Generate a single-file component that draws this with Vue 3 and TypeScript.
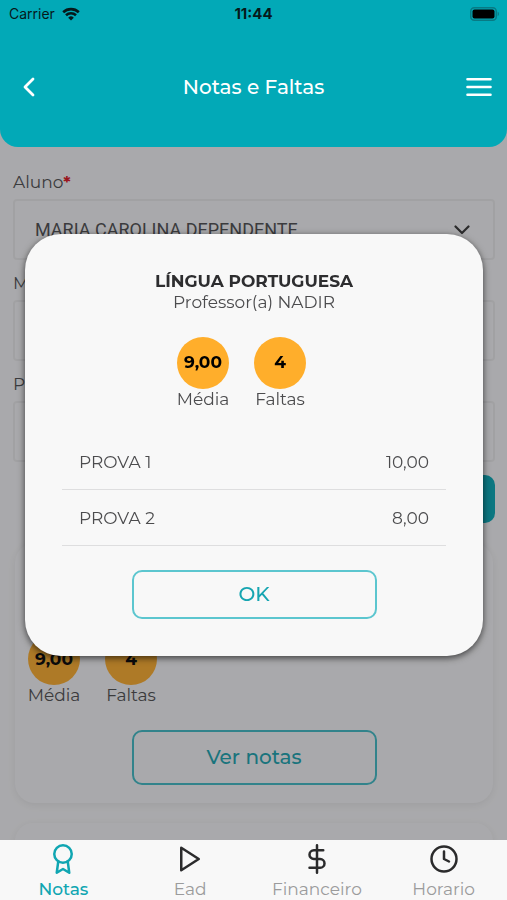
<script setup lang="ts">
import { ref } from 'vue'

interface Field {
  id: string
  label: string
  required: boolean
  options: string[]
}

interface Exam {
  name: string
  grade: string
}

const fields: Field[] = [
  { id: 'aluno', label: 'Aluno', required: true, options: ['MARIA CAROLINA DEPENDENTE'] },
  { id: 'modulo', label: 'Módulo', required: true, options: [''] },
  { id: 'periodo', label: 'Período', required: true, options: [''] },
]

const subject = 'LÍNGUA PORTUGUESA'
const teacher = 'Professor(a) NADIR'

const stats = [
  { value: '9,00', label: 'Média' },
  { value: '4', label: 'Faltas' },
]

const exams: Exam[] = [
  { name: 'PROVA 1', grade: '10,00' },
  { name: 'PROVA 2', grade: '8,00' },
]

const tabs = [
  { name: 'Notas', icon: 'award' },
  { name: 'Ead', icon: 'play' },
  { name: 'Financeiro', icon: 'dollar' },
  { name: 'Horario', icon: 'clock' },
]

const activeTab = ref('Notas')
const dialogOpen = ref(true)
</script>

<template>
  <div class="screen">
    <header class="header">
      <div class="status">
        <span class="carrier">
          Carrier
          <svg class="wifi" viewBox="0 0 18 14" aria-hidden="true">
            <path d="M1.2 5.2a11.3 11.3 0 0 1 15.6 0" />
            <path d="M4 8.2a7.3 7.3 0 0 1 10 0" />
            <path class="dot" d="M9 13.6 6.2 10.7a4 4 0 0 1 5.6 0z" />
          </svg>
        </span>
        <span class="time">11:44</span>
        <svg class="battery" viewBox="0 0 30 14" aria-hidden="true">
          <rect class="case" x="0.75" y="0.75" width="25.5" height="12.5" rx="3.5" />
          <rect x="2.5" y="2.5" width="22" height="9" rx="2" />
          <path class="cap" d="M27.6 4.8c1.8.6 1.8 3.8 0 4.4z" />
        </svg>
      </div>
      <div class="bar">
        <button class="icon-button" type="button" aria-label="Voltar">
          <svg class="back" viewBox="0 0 12 20" aria-hidden="true"><path d="M10 2 2 10l8 8" /></svg>
        </button>
        <h1>Notas e Faltas</h1>
        <button class="icon-button end" type="button" aria-label="Menu">
          <svg class="menu" viewBox="0 0 26 20" aria-hidden="true"><path d="M1.5 2.3h23M1.5 10h23M1.5 17.7h23" /></svg>
        </button>
      </div>
    </header>

    <main class="content">
      <form class="filters" @submit.prevent>
        <div v-for="field in fields" :key="field.id" class="field">
          <label :for="field.id">{{ field.label }}<b v-if="field.required">*</b></label>
          <div class="select-box">
            <select :id="field.id">
              <option v-for="option in field.options" :key="option">{{ option }}</option>
            </select>
            <svg class="chevron" viewBox="0 0 16 10" aria-hidden="true"><path d="M1.5 1.5 8 8l6.5-6.5" /></svg>
          </div>
        </div>
        <button class="search" type="submit">Buscar</button>
      </form>

      <section class="card">
        <h2>{{ subject }}</h2>
        <p class="teacher">{{ teacher }}</p>
        <div class="stats">
          <div v-for="stat in stats" :key="stat.label" class="stat">
            <span class="bubble">{{ stat.value }}</span>
            <span>{{ stat.label }}</span>
          </div>
        </div>
        <button class="outline tall" type="button" @click="dialogOpen = true">Ver notas</button>
      </section>
      <section class="card"></section>
    </main>

    <div v-if="dialogOpen" class="overlay">
      <div class="dialog" role="dialog" aria-modal="true" aria-labelledby="dialog-title">
        <h2 id="dialog-title">{{ subject }}</h2>
        <p class="teacher">{{ teacher }}</p>
        <div class="stats">
          <div v-for="stat in stats" :key="stat.label" class="stat">
            <span class="bubble">{{ stat.value }}</span>
            <span>{{ stat.label }}</span>
          </div>
        </div>
        <table>
          <tbody>
            <tr v-for="exam in exams" :key="exam.name">
              <th scope="row">{{ exam.name }}</th>
              <td>{{ exam.grade }}</td>
            </tr>
          </tbody>
        </table>
        <button class="outline" type="button" @click="dialogOpen = false">OK</button>
      </div>
    </div>

    <nav class="tabs">
      <a
        v-for="tab in tabs"
        :key="tab.name"
        href="#"
        :class="{ active: tab.name === activeTab }"
        @click.prevent="activeTab = tab.name"
      >
        <svg viewBox="0 0 24 24" aria-hidden="true">
          <template v-if="tab.icon === 'award'">
            <circle cx="12" cy="8" r="7" />
            <path d="M8.21 13.89 7 23l5-3 5 3-1.21-9.12" />
          </template>
          <path v-else-if="tab.icon === 'play'" d="m5 3 14 9-14 9z" />
          <path v-else-if="tab.icon === 'dollar'" d="M12 1v22M17 5H9.5a3.5 3.5 0 0 0 0 7h5a3.5 3.5 0 0 1 0 7H6" />
          <template v-else>
            <circle cx="12" cy="12" r="10" />
            <path d="M12 6v6l4 2" />
          </template>
        </svg>
        {{ tab.name }}
      </a>
    </nav>
  </div>
</template>

<style>
body {
  margin: 0;
}
</style>

<style scoped>
.screen,
.screen * {
  box-sizing: border-box;
}

.screen {
  display: flex;
  flex-direction: column;
  height: 100vh;
  overflow: hidden;
  background: #f8f8fa;
  color: #4c4c4e;
  font-family: Montserrat, Inter, "Liberation Sans", sans-serif;
  font-size: 17px;
  line-height: 21px;
}

button,
select {
  font: inherit;
}

svg {
  display: block;
  fill: none;
  stroke: currentColor;
  stroke-linecap: round;
  stroke-linejoin: round;
}

h1,
h2,
p {
  margin: 0;
}

.header {
  position: relative;
  z-index: 2;
  flex: none;
  border-radius: 0 0 18px 18px;
  background: #02a9b7;
  color: #fff;
}

.status {
  display: grid;
  grid-template-columns: 1fr auto 1fr;
  align-items: center;
  height: 27px;
  padding: 0 7px;
  color: #06191b;
  font-family: Inter, "Liberation Sans", sans-serif;
  font-size: 14px;
}

.carrier {
  display: flex;
  align-items: center;
  gap: 7px;
  padding-left: 2px;
}

.wifi {
  width: 18px;
  height: 14px;
  stroke-width: 2.6;
  stroke-linecap: butt;
}

.wifi .dot {
  fill: currentColor;
  stroke: none;
}

.time {
  font-size: 15px;
  font-weight: 700;
}

.battery {
  justify-self: end;
  width: 30px;
  height: 14px;
  fill: #000;
  stroke: none;
}

.battery .case {
  fill: none;
  stroke: #087a84;
  stroke-width: 1.5;
}

.battery .cap {
  fill: #087a84;
}

.bar {
  display: grid;
  grid-template-columns: 1fr auto 1fr;
  align-items: center;
  height: 120px;
  padding: 0 15px;
}

h1 {
  font-size: 20px;
  font-weight: 500;
  line-height: 24px;
}

.icon-button {
  display: flex;
  justify-self: start;
  padding: 0 8px;
  border: 0;
  background: none;
  color: inherit;
}

.icon-button.end {
  justify-self: end;
  padding: 0;
}

.back {
  width: 12px;
  height: 20px;
  stroke-width: 2.8;
}

.menu {
  width: 26px;
  height: 20px;
  stroke-width: 2.6;
}

.content {
  flex: 1;
  min-height: 0;
  overflow: hidden;
  padding: 25px 12px 0 13px;
}

.filters {
  display: flex;
  flex-direction: column;
  gap: 13px;
}

.field {
  display: flex;
  flex-direction: column;
  gap: 7px;
}

label {
  line-height: 20px;
}

label b {
  color: #e0101c;
}

.select-box {
  display: grid;
  align-items: center;
}

.select-box > * {
  grid-area: 1 / 1;
}

select {
  width: 100%;
  height: 61px;
  padding: 0 48px 0 20px;
  border: 2px solid #ebebed;
  border-radius: 4px;
  background: none;
  color: inherit;
  font-family: Roboto, Inter, sans-serif;
  font-size: 18px;
  appearance: none;
}

.chevron {
  justify-self: end;
  width: 16px;
  height: 10px;
  margin-right: 25px;
  color: #333;
  stroke-width: 2.2;
  pointer-events: none;
}

.search {
  align-self: flex-end;
  width: 50%;
  height: 48px;
  border: 0;
  border-radius: 10px;
  background: #02a9b7;
  color: #fff;
}

.card {
  display: flex;
  flex-direction: column;
  margin: 20px 2px 0;
  padding: 18px 13px;
  border-radius: 20px;
  background: #f8f8fa;
  box-shadow: 0 2px 8px rgb(0 0 0 / 8%);
}

h2 {
  color: #2d2d2f;
  font-size: 17px;
  font-weight: 700;
  line-height: 21px;
}

.stats {
  display: flex;
  margin-top: 30px;
  line-height: 21px;
}

.stat {
  display: flex;
  flex-direction: column;
  align-items: center;
  width: 52px;
  margin-right: 25px;
}

.bubble {
  display: grid;
  place-items: center;
  width: 52px;
  height: 52px;
  border-radius: 50%;
  background: #ffae2b;
  color: #000;
  font-weight: 700;
}

.outline {
  align-self: center;
  width: 245px;
  height: 49px;
  margin-top: 24px;
  border: 2px solid #5cc6cf;
  border-radius: 10px;
  background: none;
  color: #16a5b1;
  font-size: 20px;
  font-weight: 500;
}

.outline.tall {
  height: 55px;
  border-color: #3dbcc7;
}

.overlay {
  position: fixed;
  inset: 0;
  z-index: 1;
  display: grid;
  align-items: center;
  padding: 0 24px 10px 25px;
  background: rgb(30 30 34 / 36%);
}

.dialog {
  display: flex;
  flex-direction: column;
  align-items: center;
  padding: 37px;
  border-radius: 36px;
  background: #f8f8f8;
  box-shadow: 0 2px 7px rgb(0 0 0 / 65%);
}

.dialog .stats {
  margin-top: 24px;
}

table {
  width: 100%;
  margin-top: 24px;
  border-collapse: collapse;
}

th,
td {
  height: 56px;
  padding: 2px 17px 0;
  border-bottom: 1px solid #dededf;
  font-weight: 400;
  text-align: left;
}

td {
  text-align: right;
}

.tabs {
  position: relative;
  z-index: 2;
  display: flex;
  flex: none;
  height: 60px;
  background: #f8f8f8;
}

.tabs a {
  display: flex;
  flex: 1;
  flex-direction: column;
  align-items: center;
  gap: 5px;
  padding-top: 4px;
  color: #9b9b9c;
  text-decoration: none;
}

.tabs svg {
  width: 30px;
  height: 30px;
  color: #2b2b2c;
  stroke-width: 2;
}

.tabs .active {
  color: #10a6b2;
  font-weight: 500;
}

.tabs .active svg {
  color: inherit;
}
</style>
